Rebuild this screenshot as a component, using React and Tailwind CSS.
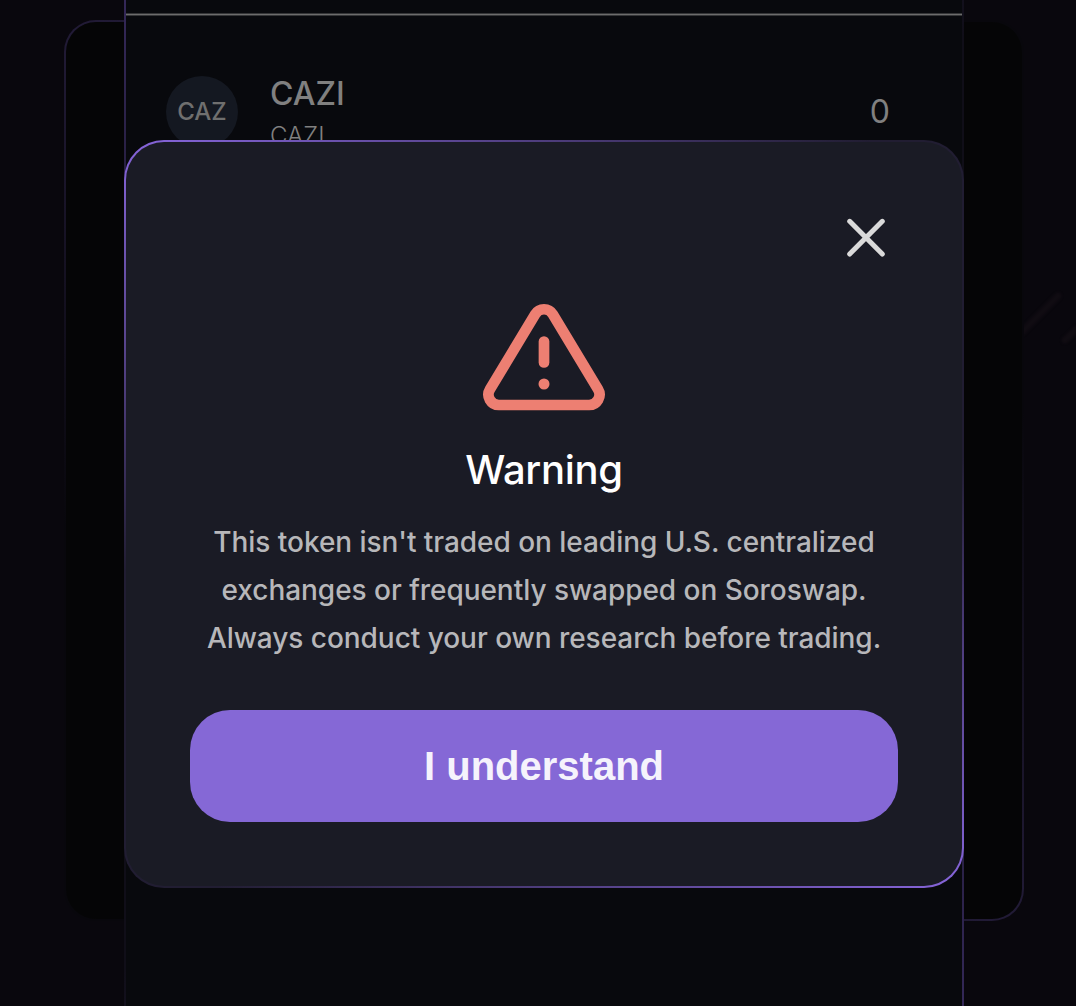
import React from 'react';

function SwapCard() {
  return (
    <div className="z-[1] col-start-1 row-start-1 ml-16 mt-5 h-[901px] w-[960px] rounded-[32px] border-2 border-transparent [background:linear-gradient(#050506,#050506)_padding-box,linear-gradient(150deg,#221b37_0%,#08070c_35%,#08070c_65%,#221b37_100%)_border-box]" />
  );
}

function TokenRow() {
  return (
    <div className="flex items-start pl-10 pr-[72px] pt-[59.5px]">
      <div className="flex size-[72px] shrink-0 items-center justify-center rounded-full bg-[#141821] text-2xl font-medium text-[#6f6f6f]">
        CAZ
      </div>
      <div className="ml-8 flex flex-col text-[#808080]">
        <span className="-mt-[1px] text-[32px] leading-[38px] font-medium">CAZI</span>
        <span className="mt-2 text-2xl leading-[30px] font-light">CAZI</span>
      </div>
      <span className="ml-auto mt-4 text-[32px] leading-10 font-normal text-[#808080]">0</span>
    </div>
  );
}

function TokenListPanel() {
  return (
    <div className="z-[2] col-start-1 row-start-1 ml-[124px] h-[1006px] w-[840px] overflow-hidden border-x-2 border-transparent [background:linear-gradient(#08090d,#08090d)_padding-box,linear-gradient(150deg,#342858_0%,#100e18_35%,#100e18_65%,#342858_100%)_border-box]">
      <div className="mt-[13px] h-[3px] border-y border-[#343537] bg-[#6c6c6c]" />
      <TokenRow />
    </div>
  );
}

function CloseIcon() {
  return (
    <svg className="size-10" viewBox="0 0 40 40" fill="none" stroke="#dadada" strokeWidth="5" strokeLinecap="round">
      <path d="M3.7 3.3 36.3 36.1M36.3 3.3 3.7 36.1" />
    </svg>
  );
}

function WarningIcon() {
  return (
    <svg className="h-[108px] w-[124px]" viewBox="0 0 124 108" fill="none" stroke="#ed7f72" strokeWidth="10.7" strokeLinecap="round" strokeLinejoin="round">
      <path d="M53.2 11.2 8 86.2A10.4 10.4 0 0 0 17 102H107A10.4 10.4 0 0 0 116 86.2L70.8 11.2A10.3 10.3 0 0 0 53.2 11.2Z" />
      <path d="M62 38.5V59.5" />
      <circle cx="62" cy="81" r="5.5" fill="#ed7f72" stroke="none" />
    </svg>
  );
}

function WarningModal() {
  return (
    <div className="z-10 col-start-1 row-start-1 ml-[124px] mt-[140px] flex h-[748px] w-[840px] flex-col items-center rounded-[40px] border-2 border-transparent px-16 [background:linear-gradient(#1a1b25,#1a1b25)_padding-box,linear-gradient(150deg,#8866dd_0%,#211d32_35%,#211d32_65%,#8866dd_100%)_border-box]">
      <button className="mr-3 mt-[76px] self-end" aria-label="Close">
        <CloseIcon />
      </button>
      <div className="mt-[45px]">
        <WarningIcon />
      </div>
      <h2 className="mt-[35px] text-[40px] leading-[48px] font-medium tracking-[-0.3px] text-white">Warning</h2>
      <p className="mt-6 text-center text-[28px] leading-[48px] font-medium tracking-[-0.04px] whitespace-nowrap text-[#b7b7ba]">
        This token isn't traded on leading U.S. centralized
        <br />
        exchanges or frequently swapped on Soroswap.
        <br />
        Always conduct your own research before trading.
      </p>
      <button className="mt-12 h-28 w-[708px] shrink-0 rounded-[40px] bg-[#8568d6] font-['Liberation_Sans',Arial,sans-serif] text-[40px] font-bold text-[#f5f3fc]">
        I understand
      </button>
    </div>
  );
}

export default function App() {
  return (
    <main className="grid h-[1006px] w-[1076px] grid-cols-1 grid-rows-1 items-start overflow-hidden bg-[#09070d] font-[Inter,sans-serif]">
      <svg className="col-start-1 row-start-1 ml-[1020px] mt-[280px] h-20 w-14 blur-[1px]" viewBox="0 0 56 80" fill="none" stroke="#100c12" strokeWidth="7" strokeLinecap="round">
        <path d="M2 52 38 16M45 60 60 46" />
      </svg>
      <SwapCard />
      <TokenListPanel />
      <WarningModal />
    </main>
  );
}
